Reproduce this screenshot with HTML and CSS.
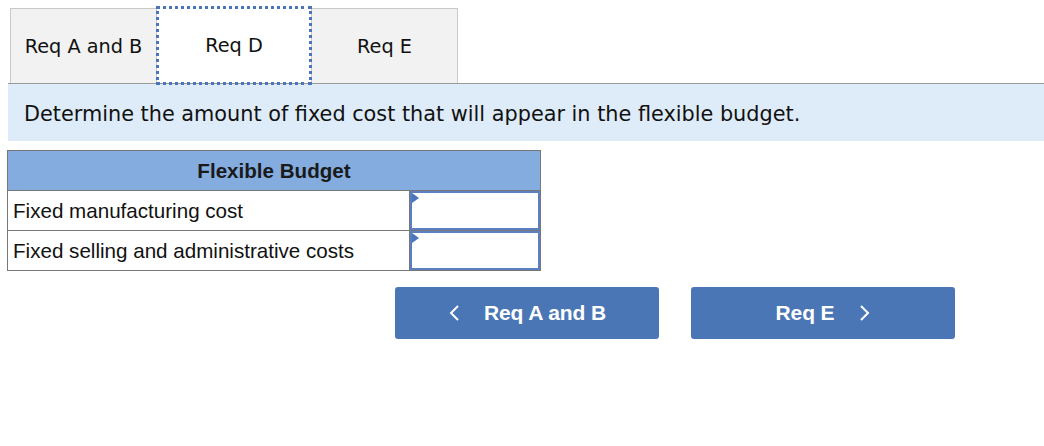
FILE: index.html
```html
<!DOCTYPE html>
<html>
<head>
<meta charset="utf-8">
<link rel="stylesheet" href="styles.css">
</head>
<body>
<div class="tabs">
  <div class="tab">Req A and B</div>
  <div class="tab active">Req D</div>
  <div class="tab">Req E</div>
  <div class="tab-fill"></div>
</div>
<div class="prompt">Determine the amount of fixed cost that will appear in the flexible budget.</div>
<table class="budget">
  <tr><th colspan="2">Flexible Budget</th></tr>
  <tr><td class="label">Fixed manufacturing cost</td><td class="cell"><div class="input"><span class="flag"></span></div></td></tr>
  <tr><td class="label">Fixed selling and administrative costs</td><td class="cell"><div class="input"><span class="flag"></span></div></td></tr>
</table>
<div class="nav">
  <button class="btn"><svg class="chev left" width="12" height="18" viewBox="0 0 12 18"><path d="M10 2 L3 9 L10 16" fill="none" stroke="#fff" stroke-width="2"/></svg><span>Req A and B</span></button>
  <button class="btn"><span>Req E</span><svg class="chev right" width="12" height="18" viewBox="0 0 12 18"><path d="M2 2 L9 9 L2 16" fill="none" stroke="#fff" stroke-width="2"/></svg></button>
</div>
</body>
</html>
```
FILE: styles.css
```css
body {
  margin: 0;
  padding: 8px 0 0 8px;
  background: #fff;
  font-family: "DejaVu Sans", Verdana, sans-serif;
}
.tabs {
  display: flex;
  height: 75px;
  padding-left: 2px;
  border-bottom: 1px solid #9a9a9a;
}
.tab {
  width: 147px;
  box-sizing: border-box;
  background: #f2f2f2;
  border: 1px solid #c9c9c9;
  border-bottom: none;
  display: flex;
  align-items: center;
  justify-content: center;
  font-size: 19.3px;
  color: #111;
}
.tab.active {
  width: 154px;
  background: #fff;
  border: none;
  position: relative;
  z-index: 1;
}
.tab.active::after {
  content: "";
  position: absolute;
  left: -1px;
  right: -1px;
  top: -2px;
  bottom: -2px;
  border: 3px dotted #4a74bb;
}
.tab-fill { flex: 1; }
.prompt {
  background: #deebf8;
  height: 57px;
  box-sizing: border-box;
  padding: 3px 0 0 16px;
  display: flex;
  align-items: center;
  font-size: 20.8px;
  color: #111;
}
.budget {
  margin: 9px 0 0 -1px;
  border-collapse: collapse;
  font-family: "Liberation Sans", Arial, sans-serif;
  font-size: 20.6px;
  color: #111;
}
.budget th {
  width: 532px;
  height: 39px;
  background: #84acdf;
  border: 1px solid #777;
  font-weight: bold;
  font-size: 20.6px;
  padding: 0;
  text-align: center;
  color: #1a1a1a;
}
.budget td {
  border: 1px solid #777;
  height: 39px;
  padding: 0;
}
.label {
  width: 395px;
  padding-left: 5px !important;
}
.cell {
  width: 130px;
  vertical-align: top;
}
.input {
  height: 35px;
  border: 2px solid #5b7fc0;
  position: relative;
}
.flag {
  position: absolute;
  left: 0;
  top: 0;
  width: 0;
  height: 0;
  border-top: 5px solid transparent;
  border-bottom: 5px solid transparent;
  border-left: 7px solid #4a76c0;
}
.nav {
  display: flex;
  gap: 32px;
  margin: 16px 0 0 387px;
}
.btn {
  width: 264px;
  height: 52px;
  background: #4a76b5;
  border: none;
  border-radius: 3px;
  color: #fff;
  font-family: "Liberation Sans", Arial, sans-serif;
  font-weight: bold;
  font-size: 21px;
  letter-spacing: -0.1px;
  display: flex;
  align-items: center;
  justify-content: center;
  padding: 0;
}
.chev.left { margin-right: 24px; }
.chev.right { margin-left: 24px; }
```
